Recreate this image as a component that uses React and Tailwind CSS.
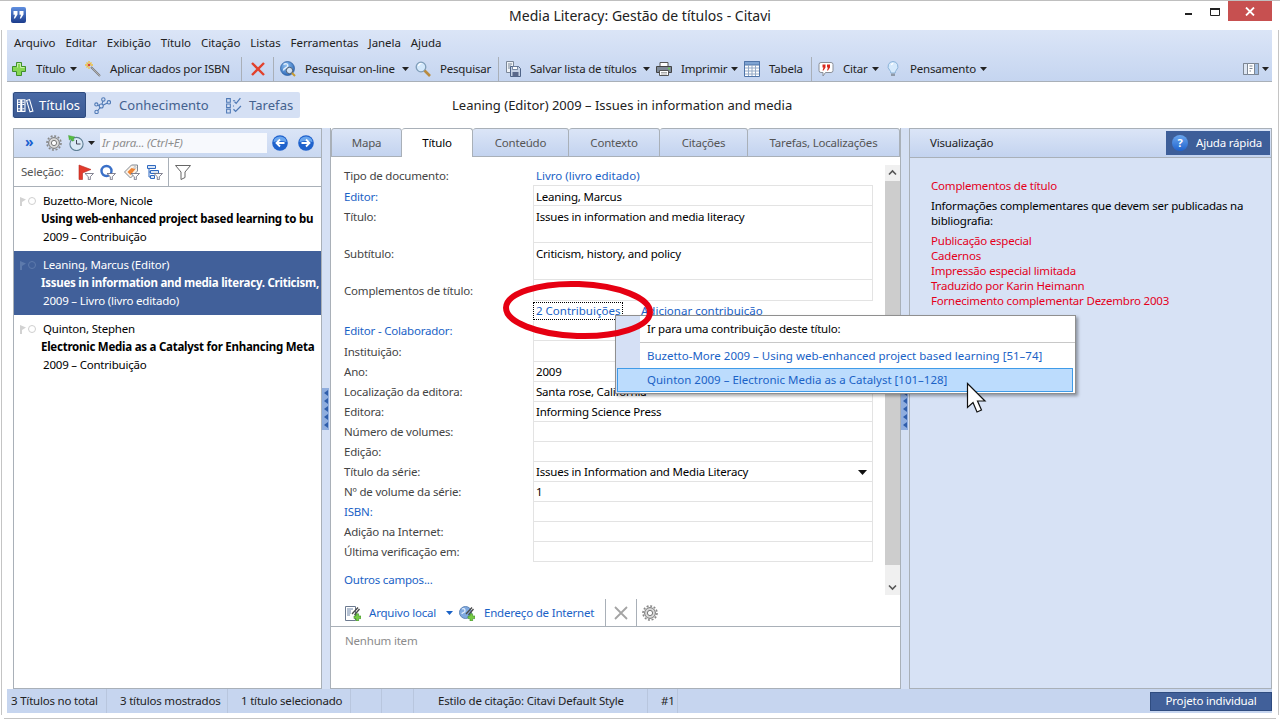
import { Fragment } from 'react';

const MENU = ['Arquivo', 'Editar', 'Exibição', 'Título', 'Citação', 'Listas', 'Ferramentas', 'Janela', 'Ajuda'];

const FORM_ROWS = [
  { label: 'Editor:', link: true, value: 'Leaning, Marcus', h: 'h-[20px]', pt: 'pt-[3px]' },
  { label: 'Título:', value: 'Issues in information and media literacy', h: 'h-[37px]', pt: 'pt-[3px]' },
  { label: 'Subtítulo:', value: 'Criticism, history, and policy', h: 'h-[37px]', pt: 'pt-[3px]' },
  { label: 'Complementos de título:', value: '', h: 'h-[21px]', pt: 'pt-[3px]' },
  { contrib: true },
  { label: 'Editor - Colaborador:', link: true, value: '', h: 'h-[20px]', pt: 'pt-[2px]' },
  { label: 'Instituição:', value: '', h: 'h-[21px]', pt: 'pt-[3px]' },
  { label: 'Ano:', value: '2009', h: 'h-[20px]', pt: 'pt-[2px]' },
  { label: 'Localização da editora:', value: 'Santa rose, California', h: 'h-[20px]', pt: 'pt-[2px]' },
  { label: 'Editora:', value: 'Informing Science Press', h: 'h-[20px]', pt: 'pt-[2px]' },
  { label: 'Número de volumes:', value: '', h: 'h-[20px]', pt: 'pt-[2px]' },
  { label: 'Edição:', value: '', h: 'h-[20px]', pt: 'pt-[2px]' },
  { label: 'Título da série:', value: 'Issues in Information and Media Literacy', h: 'h-[20px]', pt: 'pt-[2px]', select: true },
  { label: 'Nº de volume da série:', value: '1', h: 'h-[20px]', pt: 'pt-[2px]' },
  { label: 'ISBN:', link: true, value: '', h: 'h-[20px]', pt: 'pt-[2px]' },
  { label: 'Adição na Internet:', value: '', h: 'h-[20px]', pt: 'pt-[2px]' },
  { label: 'Última verificação em:', value: '', h: 'h-[20px]', pt: 'pt-[2px]' },
];

const REFS = [
  { author: 'Buzetto-More, Nicole', title: 'Using web-enhanced project based learning to bu', meta: '2009 – Contribuição' },
  { author: 'Leaning, Marcus (Editor)', title: 'Issues in information and media literacy. Criticism,', meta: '2009 – Livro (livro editado)', selected: true },
  { author: 'Quinton, Stephen', title: 'Electronic Media as a Catalyst for Enhancing Meta', meta: '2009 – Contribuição' },
];

const TABS = [
  { name: 'Mapa', w: 'w-[71px]' },
  { name: 'Título', w: 'w-[71px]', active: true },
  { name: 'Conteúdo', w: 'w-[96px]' },
  { name: 'Contexto', w: 'w-[91px]' },
  { name: 'Citações', w: 'w-[88px]' },
  { name: 'Tarefas, Localizações', w: 'w-[152px]' },
];

const Caret = ({ color = '#222' }) => (
  <svg width="7" height="4" viewBox="0 0 7 4" className="shrink-0"><path d="M0 0h7L3.5 4z" fill={color} /></svg>
);

const Sep = ({ className }) => <div className={`w-px h-[25px] bg-[#a9afb8] shrink-0 ${className}`} />;

const Ico = ({ children, s = 16, className = '' }) => (
  <svg width={s} height={s} viewBox="0 0 16 16" className={`shrink-0 ${className}`}>{children}</svg>
);

const PlusIcon = () => (
  <Ico>
    <path d="M5.500 1.500h5v4h4v5h-4v4h-5v-4h-4v-5h4z" fill="#86d653" stroke="#3f8f2a" strokeLinejoin="round" />
    <path d="M6.500 6.500v-4h3v4h4" fill="none" stroke="#c8f0a8" />
  </Ico>
);
const WandIcon = () => (
  <Ico>
    <path d="M6 6l9 9" stroke="#7d7d7d" strokeWidth="2" />
    <path d="M6.500 6.500l8.500 8.500" stroke="#d0d0d0" strokeWidth="0.600" />
    <path d="M4 0v2.500M4 5.500V8M0 4h2.500M5.500 4H8M1.500 1.500l1.500 1.500M6.500 1.500L5 3M1.500 6.500L3 5" stroke="#f0c23c" strokeWidth="1.300" />
    <circle cx="4" cy="4" r="1.300" fill="#d9483f" />
  </Ico>
);
const RedX = () => (
  <Ico><path d="M2 2l12 12M14 2L2 14" stroke="#e2412c" strokeWidth="2.400" /></Ico>
);
const GlobeIcon = () => (
  <Ico>
    <defs>
      <radialGradient id="globeFill" cx="0.4" cy="0.3" r="0.8">
        <stop offset="0" stopColor="#8fc0f2" />
        <stop offset="1" stopColor="#1f5cb0" />
      </radialGradient>
    </defs>
    <circle cx="7.500" cy="7.500" r="7" fill="url(#globeFill)" stroke="#2a5c9e" strokeWidth="0.700" />
    <path d="M3.500 3.500c3-2 5 0 4 2s-4 1-4 4" stroke="#e2eefb" strokeWidth="1.500" fill="none" />
    <circle cx="9.500" cy="9.500" r="3.200" fill="#e8f1fb" fillOpacity="0.850" stroke="#4d5c70" />
    <path d="M12 12l3 3" stroke="#c79a2e" strokeWidth="2" />
  </Ico>
);
const SearchIcon = () => (
  <Ico>
    <circle cx="6" cy="6" r="4.800" fill="#d3e8fb" stroke="#7f9db8" strokeWidth="1.300" />
    <path d="M3.500 5a3 3 0 0 1 3-2.500" stroke="#fff" strokeWidth="1.200" fill="none" />
    <path d="M9.500 9.500L15 15" stroke="#b98b3f" strokeWidth="2.600" />
  </Ico>
);
const SaveListIcon = () => (
  <Ico>
    <path d="M1.500 .5h7v11h-7z" fill="#eef2f7" stroke="#7b8798" />
    <path d="M3 3h4M3 5h3M3 7h2" stroke="#7b8798" />
    <path d="M5.500 5.500h8l2 2v8h-10z" fill="#c5d1e4" stroke="#4f6488" />
    <path d="M7.500 5.500h5v3h-5z" fill="#fff" stroke="#4f6488" strokeWidth="0.700" />
    <path d="M7.500 11h6v4.500h-6z" fill="#59688a" />
  </Ico>
);
const PrintIcon = () => (
  <Ico>
    <path d="M4 1.500h8v4H4z" fill="#fff" stroke="#555" />
    <path d="M.5 5.500h15v6H.5z" fill="#7f8a98" stroke="#444" />
    <path d="M3.500 9.500h9v5h-9z" fill="#fff" stroke="#555" />
    <path d="M5 11.500h6M5 13h6" stroke="#aaa" />
    <circle cx="13" cy="7.500" r="1" fill="#6fd04b" />
  </Ico>
);
const TableIcon = () => (
  <Ico>
    <path d="M.5 .5h15v15H.5z" fill="#fff" stroke="#4f74a8" />
    <path d="M.5 .5h15v3.500H.5z" fill="#7ea3d2" stroke="#4f74a8" />
    <path d="M1 7h14M1 10h14M1 13h14M4.500 4v11M8 4v11M11.500 4v11" stroke="#93a9c6" />
  </Ico>
);
const CiteIcon = () => (
  <Ico>
    <path d="M3 1.500h10a2 2 0 0 1 2 2v6a2 2 0 0 1-2 2H7.500L5 15v-3.500H3a2 2 0 0 1-2-2v-6a2 2 0 0 1 2-2z" fill="#fff" stroke="#8a8f98" />
    <path d="M4.500 3.500h3v3L5.500 9.500H4.500l1-3h-1zM9 3.500h3v3L10 9.500H9l1-3H9z" fill="#d82a20" />
  </Ico>
);
const BulbIcon = () => (
  <Ico>
    <path d="M8 .5a5 5 0 0 0-3.300 8.700c.8.800 1.100 1.800 1.100 2.800h4.400c0-1 .3-2 1.100-2.800A5 5 0 0 0 8 .5z" fill="#d6eafc" stroke="#8ab2d8" />
    <path d="M6.300 4a2.500 2.500 0 0 1 2-1.600" stroke="#fff" strokeWidth="1.200" fill="none" />
    <path d="M6 12.500h4v2.500H6z" fill="#8f9aa8" />
  </Ico>
);
const LayoutIcon = () => (
  <Ico>
    <path d="M.5 2.500h15v11H.5z" fill="#fff" stroke="#7d8794" />
    <path d="M.5 2.500h4v11h-4z" fill="#dde6f3" stroke="#7d8794" />
    <path d="M11.500 2.500h4v11h-4z" fill="#9fbbe0" stroke="#7d8794" />
    <path d="M6.500 5h3M6.500 7.500h3M6.500 10H8" stroke="#7d8794" />
  </Ico>
);
const BooksIcon = () => (
  <Ico s={17}>
    <path d="M.5 2.500h3v11h-3zM4.500 2.500h3v11h-3z" fill="none" stroke="#fff" />
    <path d="M9 3.200l2.800-.8 3.200 10.800-2.800.8z" fill="none" stroke="#fff" />
    <path d="M1 5h2M5 5h2M1 7h2M5 7h2M1 11h2M5 11h2" stroke="#fff" />
  </Ico>
);
const NetIcon = () => (
  <Ico s={17}>
    <g fill="none" stroke="#4f79b5">
      <path d="M7 8.500L8.500 3.500M7 8.500l6-3M7 8.500l-4-1M7 8.500l-4 5" />
      <circle cx="8.800" cy="2.300" r="1.600" fill="#d5e0f4" />
      <circle cx="14" cy="5" r="1.600" fill="#d5e0f4" />
      <circle cx="6.800" cy="8.500" r="1.900" fill="#d5e0f4" />
      <circle cx="2.200" cy="7" r="1.500" fill="#d5e0f4" />
      <circle cx="2.400" cy="14" r="1.600" fill="#d5e0f4" />
    </g>
  </Ico>
);
const TasksIcon = () => (
  <Ico s={17}>
    <g fill="none" stroke="#4f79b5">
      <path d="M1.500 1.500h3.500v3.500H1.500zM1.500 6.500h3.500V10H1.500zM1.500 11.500h3.500V15H1.500z" />
      <path d="M7.500 3.500h2M7.500 8.500h1" />
      <path d="M9 4.500l1.500 1.500 4-5M8 11.500l2 2 5-5" strokeWidth="1.200" />
    </g>
  </Ico>
);
const Gear = () => (
  <Ico>
    <circle cx="8" cy="8" r="5.400" fill="#d8d8d8" stroke="#777" strokeWidth="1" />
    <circle cx="8" cy="8" r="7" fill="none" stroke="#888" strokeWidth="1.600" strokeDasharray="2 1.660" />
    <circle cx="8" cy="8" r="2.600" fill="#fff" stroke="#777" />
  </Ico>
);
const ClockIcon = () => (
  <Ico>
    <circle cx="8.500" cy="9" r="6.600" fill="#dbe8f5" stroke="#5f7f95" strokeWidth="1.100" />
    <path d="M8.500 5V9h4" stroke="#445" fill="none" />
    <path d="M.5 .5l6.500 1.500-1.800 1.400 1 2-2 .8-1-2.200L1.300 5z" fill="#55c040" stroke="#3f9230" strokeWidth="0.400" />
  </Ico>
);
const NavBtn = ({ back }) => (
  <Ico>
    <circle cx="8" cy="8" r="7.800" fill="#1f62cc" />
    <path d="M1.500 7a6.500 5.500 0 0 1 13 0c-3-1.500-10-1.500-13 0z" fill="#6aa6ee" />
    <path d={back ? 'M12.500 8H4.500M8 4.500L4.500 8 8 11.500' : 'M3.500 8h8M8 4.500L11.500 8 8 11.500'} stroke="#fff" strokeWidth="1.800" fill="none" />
  </Ico>
);
const FunnelBadge = () => (
  <path d="M7 9.500h8.500l-3.200 3.200v3h-2v-3z" fill="#fff" stroke="#667" strokeWidth="0.800" />
);
const SelFlag = () => (
  <Ico>
    <path d="M1 15.500V1l12 4.500L4.500 9v6.500z" fill="#e23a2c" stroke="#b52a20" strokeWidth="0.600" />
    <FunnelBadge />
  </Ico>
);
const SelCircle = () => (
  <Ico>
    <circle cx="6.500" cy="7" r="5" fill="#fff" stroke="#3a70c8" strokeWidth="2.400" />
    <FunnelBadge />
  </Ico>
);
const SelTag = () => (
  <Ico>
    <path d="M.5 8l7-7h6v6l-7 7z" fill="#fbf1e6" stroke="#7f8894" />
    <path d="M3.500 8l4-4 4 1-5 6z" fill="#ee8434" />
    <circle cx="11" cy="3.500" r="1" fill="#fff" stroke="#7f8894" strokeWidth="0.500" />
    <FunnelBadge />
  </Ico>
);
const SelList = () => (
  <Ico>
    <path d="M.5 1.500h8v3h-8zM3.500 6.500h8v3h-8zM3.500 11.500h4v3h-4z" fill="#dbe6f5" stroke="#2f69c0" />
    <path d="M2 4.500v8.500h1.500M2 8h1.500" stroke="#2f69c0" fill="none" />
    <FunnelBadge />
  </Ico>
);
const Funnel = () => (
  <Ico>
    <path d="M.5 1.500h15L10 8v5.500l-4 2V8z" fill="#fff" stroke="#666" />
  </Ico>
);
const GreenPlus = () => (
  <path d="M9 11h2V8.800h2.600V11H16v2.600h-2.400V16H11v-2.400H9z" fill="#77cc44" stroke="#3c8a2a" strokeWidth="0.600" />
);
const Chain = () => (
  <path d="M7 9l6-6.500M9.500 10l5-6" stroke="#4a4a4a" strokeWidth="1.300" />
);
const LocalFileIcon = () => (
  <Ico>
    <path d="M.5 1.500h10v14H.5z" fill="#fff" stroke="#6c7a90" />
    <path d="M2 4h6M2 6h4M2 8h4M2 10h3" stroke="#6f86a8" />
    <Chain />
    <GreenPlus />
  </Ico>
);
const WebFileIcon = () => (
  <Ico>
    <circle cx="6.500" cy="7.500" r="6" fill="#7fa9e0" stroke="#5f86b8" />
    <path d="M3 4c2-1 3 0 3 2s-3 1-3 3" stroke="#e2eefb" strokeWidth="1.300" fill="none" />
    <Chain />
    <GreenPlus />
  </Ico>
);

function ToolItem({ icon, label, w, caret }) {
  return (
    <div className="flex items-center shrink-0">
      {icon}
      <span className={`ml-[9px] whitespace-nowrap ${w}`}>{label}</span>
      {caret && <span className="ml-[6px] mr-[6px]"><Caret /></span>}
    </div>
  );
}

function Toolbar() {
  return (
    <div className="flex items-center h-[24px] mt-[4px] pl-[4px] text-[#222]">
      <ToolItem icon={<PlusIcon />} label="Título" w="w-[28px]" caret />
      <span className="w-[2px]" />
      <ToolItem icon={<WandIcon />} label="Aplicar dados por ISBN" w="w-[121px]" />
      <Sep className="ml-[10px] mr-[8px]" />
      <RedX />
      <Sep className="ml-[7px] mr-[6px]" />
      <ToolItem icon={<GlobeIcon />} label="Pesquisar on-line" w="w-[91px]" caret />
      <ToolItem icon={<SearchIcon />} label="Pesquisar" w="w-[49px]" />
      <Sep className="ml-[9px] mr-[6px]" />
      <ToolItem icon={<SaveListIcon />} label="Salvar lista de títulos" w="w-[107px]" caret />
      <ToolItem icon={<PrintIcon />} label="Imprimir" w="w-[44px]" caret />
      <ToolItem icon={<TableIcon />} label="Tabela" w="w-[33px]" />
      <Sep className="ml-[9px] mr-[6px]" />
      <ToolItem icon={<CiteIcon />} label="Citar" w="w-[23px]" caret />
      <ToolItem icon={<BulbIcon />} label="Pensamento" w="w-[64px]" caret />
      <div className="ml-auto mr-[3px] flex items-center gap-[3px]">
        <LayoutIcon />
        <Caret />
      </div>
    </div>
  );
}

function ViewSwitch() {
  return (
    <div className="flex items-center h-[26px] w-[288px] pl-[1px] bg-[#d5e0f4] rounded-[2px] text-[13px] tracking-[0.05px] text-[#44628f]">
      <div className="flex items-center gap-[5px] h-[26px] w-[73px] pl-[3px] bg-gradient-to-b from-[#4a6aa5] to-[#3b5a94] border border-[#2f4c80] rounded-[2px] text-white shrink-0">
        <BooksIcon />
        <span>Títulos</span>
      </div>
      <div className="flex items-center gap-[8px] ml-[8px]">
        <NetIcon />
        <span className="w-[90px] whitespace-nowrap">Conhecimento</span>
      </div>
      <div className="flex items-center gap-[7px] ml-[16px]">
        <TasksIcon />
        <span>Tarefas</span>
      </div>
    </div>
  );
}

function RefList() {
  return (
    <div className="flex flex-col w-[309px] shrink-0 border border-[#a9b0b8] bg-white">
      <div className="flex items-center h-[29px] pl-[11px] border-b border-[#a9b0b8] bg-gradient-to-b from-[#dbe5f7] to-[#c9d8f1]">
        <span className="text-[#1a5fd0] text-[14px] leading-none font-bold w-[21px] -mt-[3px]">»</span>
        <Gear />
        <span className="w-[6px]" />
        <ClockIcon />
        <span className="ml-[4px]"><Caret /></span>
        <div className="ml-[5px] w-[167px] h-[20px] bg-[#f7f9fd] pl-[2px] flex items-center italic text-[#8d8d8d]">Ir para... (Ctrl+E)</div>
        <span className="ml-[5px]"><NavBtn back /></span>
        <span className="ml-[10px]"><NavBtn /></span>
      </div>
      <div className="flex items-center h-[29px] pl-[7px] border-b border-[#a9b0b8]">
        <span className="text-[#555] w-[57px]">Seleção:</span>
        <SelFlag />
        <span className="w-[6px]" />
        <SelCircle />
        <span className="w-[8px]" />
        <SelTag />
        <span className="w-[7px]" />
        <SelList />
        <span className="w-[5px]" />
        <div className="w-px h-[28px] bg-[#a9b0b8]" />
        <span className="w-[6px]" />
        <Funnel />
      </div>
      {REFS.map(r => (
        <div key={r.author} className={`h-[64px] pt-[5px] pr-[3px] leading-[18px] overflow-hidden ${r.selected ? 'bg-[#41609a] text-white' : 'text-black'}`}>
          <div className="flex items-center h-[18px] pl-[6px]">
            <svg width="6" height="9" viewBox="0 0 6 9" className="shrink-0"><path d="M0 0l6 2.500L2 5v4H0z" fill={r.selected ? '#5d7aac' : '#d2d2d2'} /></svg>
            <span className={`ml-[2px] w-[8px] h-[8px] rounded-full border ${r.selected ? 'border-[#5d7aac]' : 'border-[#cfcfcf]'}`} />
            <span className="ml-[7px]">{r.author}</span>
          </div>
          <div className="pl-[27px] font-bold tracking-[-0.25px] whitespace-nowrap">{r.title}</div>
          <div className="pl-[29px]">{r.meta}</div>
        </div>
      ))}
    </div>
  );
}

function Gripper() {
  return (
    <div className="flex flex-col items-center gap-[2px] w-[7px] py-[2px] bg-[#8fadde]">
      {[0, 1, 2, 3, 4].map(i => (
        <svg key={i} width="4" height="6" viewBox="0 0 4 6"><path d="M4 0v6L0 3z" fill="#2f5dab" /></svg>
      ))}
    </div>
  );
}

function TabStrip() {
  return (
    <div className="flex h-[29px] shrink-0 border-b border-[#a9b0b8]">
      {TABS.map(t => (
        <div
          key={t.name}
          className={`${t.w} h-[29px] shrink-0 flex items-center justify-center border-t border-r border-[#a9b0b8] first:border-l rounded-t-[3px] ${t.active ? 'bg-white text-black' : 'bg-gradient-to-b from-[#dbe5f7] to-[#c3d3ef] text-[#555] border-b'}`}
        >
          {t.name}
        </div>
      ))}
    </div>
  );
}

function FormRow({ row }) {
  if (row.contrib) {
    return (
      <div className="flex h-[20px] items-center pl-[190px] tracking-normal text-[#1a62c6]">
        <span className="w-[88px] h-[16px] pl-[2px] whitespace-nowrap outline-1 outline-dotted outline-black">2 Contribuições</span>
        <span className="ml-[19px]">Adicionar contribuição</span>
      </div>
    );
  }
  return (
    <div className={`flex ${row.h}`}>
      <div className={`w-[189px] ${row.pt} shrink-0 ${row.link ? 'text-[#1a62c6]' : 'text-[#444]'}`}>{row.label}</div>
      <div className={`w-[340px] border-l border-r border-b border-[#e3e3e3] pl-[2px] ${row.pt} text-black flex justify-between`}>
        <span>{row.value}</span>
        {row.select && <span className="mt-[6px] mr-[5px]"><svg width="9" height="5" viewBox="0 0 9 5" className="block"><path d="M0 0h9L4.500 5z" fill="#111" /></svg></span>}
      </div>
    </div>
  );
}

function Scrollbar() {
  return (
    <div className="flex flex-col items-center w-[15px] shrink-0 h-[430px] mt-[8px] bg-[#f0f0f0]">
      <svg width="15" height="16" viewBox="0 0 15 16"><path d="M4 9.500L7.500 6 11 9.500" stroke="#555" strokeWidth="1.600" fill="none" /></svg>
      <div className="w-full h-[384px] bg-[#cdcdcd]" />
      <span className="flex-1" />
      <svg width="15" height="16" viewBox="0 0 15 16"><path d="M4 6.500L7.500 10 11 6.500" stroke="#555" strokeWidth="1.600" fill="none" /></svg>
    </div>
  );
}

function TitlePanel() {
  return (
    <div className="flex flex-col w-[571px] h-full shrink-0 bg-white border-l border-r border-b border-[#a9b0b8]">
      <TabStrip />
      <div className="flex h-[442px] shrink-0">
        <div className="flex-1 pl-[13px] pt-[9px]">
          <div className="flex h-[19px] pt-[2px]">
            <div className="w-[192px] shrink-0 text-[#444]">Tipo de documento:</div>
            <div className="tracking-normal text-[#1a62c6]">Livro (livro editado)</div>
          </div>
          <div className="border-t border-[#e3e3e3] ml-[189px] w-[340px]" />
          <div className="-mt-px pt-px">
            {FORM_ROWS.map((r, i) => <FormRow key={i} row={r} />)}
          </div>
          <div className="mt-[10px] text-[#1a62c6]">Outros campos...</div>
        </div>
        <Scrollbar />
      </div>
      <div className="flex items-center h-[28px] shrink-0 pl-[14px] border-b border-[#a9b0b8] text-[#1a62c6]">
        <LocalFileIcon />
        <span className="ml-[8px] w-[72px] whitespace-nowrap">Arquivo local</span>
        <span className="ml-[5px] mr-[6px]"><Caret color="#1a62c6" /></span>
        <WebFileIcon />
        <span className="ml-[9px] w-[110px] whitespace-nowrap">Endereço de Internet</span>
        <div className="w-px h-[27px] bg-[#a9b0b8] ml-[11px]" />
        <span className="ml-[7px] mr-[7px]">
          <Ico><path d="M2 2l12 12M14 2L2 14" stroke="#a4a4a4" strokeWidth="1.800" /></Ico>
        </span>
        <div className="w-px h-[27px] bg-[#a9b0b8]" />
        <span className="ml-[5px]"><Gear /></span>
      </div>
      <div className="pl-[14px] pt-[6px] text-[#8b8b8b]">Nenhum item</div>
    </div>
  );
}

function Preview() {
  return (
    <div className="flex flex-col w-[363px] shrink-0 bg-[#d7e2f5] border border-[#a9b0b8]">
      <div className="flex items-center h-[29px] pl-[20px] pr-[1px] border-b border-[#a9b0b8] bg-gradient-to-b from-[#dbe5f7] to-[#c3d3ef] text-[#222]">
        <span>Visualização</span>
        <div className="ml-auto flex items-center w-[104px] h-[24px] pl-[6px] bg-[#3d5e99] text-white">
          <span className="flex items-center justify-center w-[16px] h-[16px] rounded-full bg-gradient-to-b from-[#6aa6ee] to-[#1f62cc] text-[11px] font-bold">?</span>
          <span className="ml-[8px]">Ajuda rápida</span>
        </div>
      </div>
      <div className="pl-[21px] pt-[20px] pr-[20px] leading-[15px] text-black">
        <p className="text-[#e4001b]">Complementos de título</p>
        <p className="mt-[5px]">Informações complementares que devem ser publicadas na bibliografia:</p>
        <div className="mt-[5px] text-[#e4001b]">
          {['Publicação especial', 'Cadernos', 'Impressão especial limitada', 'Traduzido por Karin Heimann', 'Fornecimento complementar Dezembro 2003'].map(t => <p key={t}>{t}</p>)}
        </div>
      </div>
    </div>
  );
}

function StatusBar() {
  const cells = [
    { t: '3 Títulos no total', w: 'w-[100px] pl-[4px]' },
    { t: '3 títulos mostrados', w: 'w-[121px] pl-[13px]' },
    { t: '1 título selecionado', w: 'w-[123px] pl-[13px]' },
    { t: '', w: 'w-[31px]' },
    { t: '', w: 'w-[32px]' },
    { t: 'Estilo de citação: Citavi Default Style', w: 'w-[234px] pl-[24px]' },
    { t: '#1', w: 'w-[30px] pl-[13px]' },
  ];
  return (
    <div className="flex items-center h-[24px] bg-[#c6d5ef] text-[#222]">
      {cells.map((c, i) => (
        <div key={i} className={`${c.w} h-[24px] flex items-center border-r border-[#b8c6de] shrink-0 whitespace-nowrap`}>{c.t}</div>
      ))}
      <div className="ml-auto flex items-center justify-center w-[122px] h-[19px] bg-[#41609a] border border-[#2f4c80] text-white">Projeto individual</div>
    </div>
  );
}

function Overlays() {
  return (
    <Fragment>
      <div className="absolute left-[615px] top-[315px] w-[461px] h-[79px] bg-white border border-[#8f8f8f] shadow-[2px_2px_3px_rgba(0,0,0,0.35)] flex z-10">
        <div className="w-[24px] bg-[#d5e0f5] shrink-0" />
        <div className="flex-1 flex flex-col">
          <div className="h-[27px] pl-[7px] flex items-center border-b border-[#c8c8c8] text-black">Ir para uma contribuição deste título:</div>
          <div className="h-[26px] pl-[7px] flex items-center tracking-normal text-[#1a62c6]">Buzetto-More 2009 – Using web-enhanced project based learning [51–74]</div>
        </div>
        <div className="absolute left-[1px] top-[52px] w-[456px] h-[24px] bg-[#bcdcfd] border border-[#3f9be8] pl-[29px] flex items-center tracking-normal text-[#1a62c6]">Quinton 2009 – Electronic Media as a Catalyst [101–128]</div>
      </div>
      <svg width="170" height="80" viewBox="0 0 170 80" className="absolute left-[493px] top-[271px] z-20">
        <ellipse cx="85" cy="39" rx="72" ry="26" fill="none" stroke="#e60012" strokeWidth="6" transform="rotate(2 85 39)" />
      </svg>
      <svg width="24" height="34" viewBox="0 0 24 34" className="absolute left-[966px] top-[382px] z-30">
        <path d="M1.500 1.500v24l5.500-5 4 9.500 4.500-2-4-9h7.500z" fill="#fff" stroke="#111" strokeWidth="1.200" />
      </svg>
    </Fragment>
  );
}

export default function App() {
  return (
    <div className="relative w-[1280px] h-[720px] overflow-hidden bg-white text-[11.5px] tracking-[-0.2px] leading-[16px] text-black font-['Noto_Sans',sans-serif]">
      <div className="h-px bg-[#bfbfbf]" />
      <div className="relative flex items-center justify-center h-[29px] text-[14px] tracking-normal text-[#222]">
        <span>Media Literacy: Gestão de títulos - Citavi</span>
        <svg width="15" height="16" viewBox="0 0 15 16" className="absolute left-[11px] top-[6px]">
          <defs>
            <linearGradient id="logoFill" x1="0" y1="0" x2="0" y2="1">
              <stop offset="0" stopColor="#5f8fe0" />
              <stop offset="1" stopColor="#1c3c8c" />
            </linearGradient>
          </defs>
          <rect width="15" height="16" rx="2" fill="url(#logoFill)" />
          <path d="M2.500 4h4v3.500L4 11.500H2.800L4 7.800H2.500zM8.500 4h4v3.500L10 11.500H8.800L10 7.800H8.500z" fill="#fff" />
        </svg>
        <div className="absolute right-[8px] top-0 flex items-start">
          <svg width="28" height="20" viewBox="0 0 28 20"><path d="M13 13h7" stroke="#222" strokeWidth="2" /></svg>
          <svg width="28" height="20" viewBox="0 0 28 20"><path d="M10.500 7.500h9v7h-9z" fill="none" stroke="#222" /><path d="M10 8h10" stroke="#222" strokeWidth="2" /></svg>
          <div className="flex items-center justify-center w-[44px] h-[20px] bg-[#c75050]">
            <svg width="10" height="9" viewBox="0 0 10 9"><path d="M1 .5l8 8M9 .5l-8 8" stroke="#fff" strokeWidth="1.800" /></svg>
          </div>
        </div>
      </div>
      <div className="mx-px pl-[5px] pr-[6px] pb-[2px] border-l border-r border-[#c4c4c4] h-[685px]">
        <div className="h-[52px] pt-[3px] bg-gradient-to-b from-[#dbe5f7] to-[#c5d5f0] border-b border-[#a9b0b8]">
          <div className="flex items-center h-[20px] pl-[7px] gap-[10px] tracking-[-0.06px] text-[#222]">
            {MENU.map(m => <span key={m}>{m}</span>)}
          </div>
          <Toolbar />
        </div>
        <div className="flex items-center h-[46px] pl-[5px]">
          <ViewSwitch />
          <span className="ml-[152px] text-[13px] tracking-normal text-[#222]">Leaning (Editor) 2009 – Issues in information and media</span>
        </div>
        <div className="flex h-[561px] bg-[#d5e0f4]">
          <div className="w-[6px] bg-white shrink-0" />
          <RefList />
          <div className="w-[8px] shrink-0 flex items-center"><Gripper /></div>
          <TitlePanel />
          <div className="w-[8px] shrink-0 flex items-center"><Gripper /></div>
          <Preview />
        </div>
        <StatusBar />
      </div>
      <div className="mt-[3px] mx-[4px] h-px bg-[#c4c4c4]" />
      <Overlays />
    </div>
  );
}
